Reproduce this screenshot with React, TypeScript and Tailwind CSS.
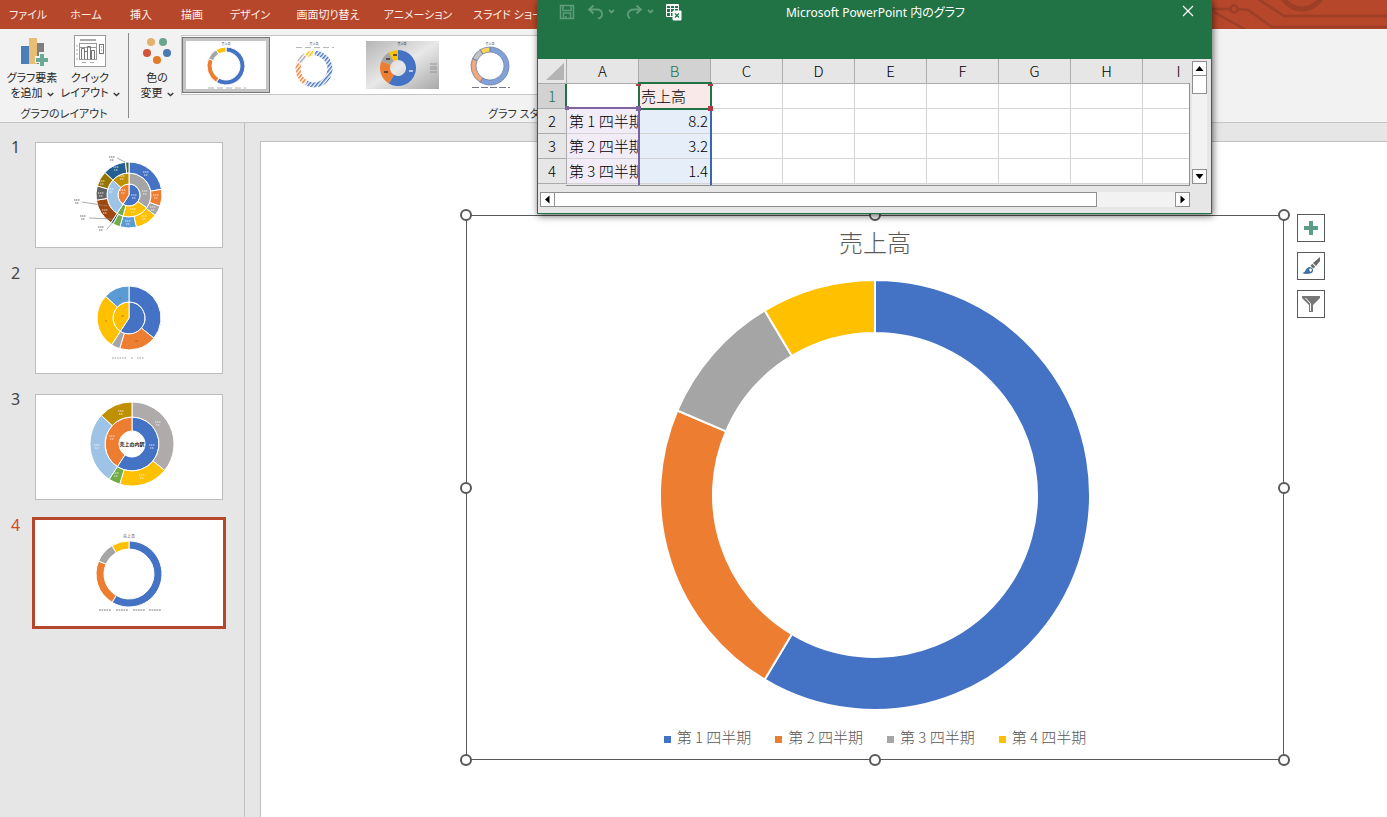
import type { ReactNode } from "react";

type Slice = { value: number; color: string };
type Ring = { inner: number; outer: number; slices: Slice[] };

const sales = [
  { label: "第 1 四半期", value: 8.2, color: "#4472c4" },
  { label: "第 2 四半期", value: 3.2, color: "#ed7d31" },
  { label: "第 3 四半期", value: 1.4, color: "#a5a5a5" },
  { label: "第 4 四半期", value: 1.2, color: "#ffc000" },
];

const tabs = [
  { label: "ファイル", width: "w-[56px]" },
  { label: "ホーム", width: "w-[60px]" },
  { label: "挿入", width: "w-[50px]" },
  { label: "描画", width: "w-[52px]" },
  { label: "デザイン", width: "w-[64px]" },
  { label: "画面切り替え", width: "w-[92px]" },
  { label: "アニメーション", width: "w-[88px]" },
  { label: "スライド ショー", width: "w-[92px]" },
];

const columns = ["A", "B", "C", "D", "E", "F", "G", "H", "I"];

const rows = [
  ["", "売上高"],
  ["第 1 四半期", "8.2"],
  ["第 2 四半期", "3.2"],
  ["第 3 四半期", "1.4"],
];

function point(cx: number, cy: number, r: number, turn: number) {
  const a = turn * Math.PI * 2;
  return `${(cx + r * Math.sin(a)).toFixed(2)} ${(cy - r * Math.cos(a)).toFixed(2)}`;
}

function slicePath(cx: number, cy: number, inner: number, outer: number, from: number, to: number) {
  const large = to - from > 0.5 ? 1 : 0;
  return [
    `M${point(cx, cy, outer, from)}`,
    `A${outer} ${outer} 0 ${large} 1 ${point(cx, cy, outer, to)}`,
    `L${point(cx, cy, inner, to)}`,
    inner > 0 ? `A${inner} ${inner} 0 ${large} 0 ${point(cx, cy, inner, from)}` : "",
    "Z",
  ].join(" ");
}

type DonutProps = { cx: number; cy: number; rings: Ring[]; gap?: number; stroke?: string };

function Donut({ cx, cy, rings, gap = 1, stroke = "#fff" }: DonutProps) {
  return (
    <g stroke={stroke} strokeWidth={gap} strokeLinejoin="round">
      {rings.map((ring, i) => {
        const total = ring.slices.reduce((sum, s) => sum + s.value, 0);
        let at = 0;
        return ring.slices.map((s, j) => {
          const from = at / total;
          at += s.value;
          return <path key={`${i}-${j}`} d={slicePath(cx, cy, ring.inner, ring.outer, from, at / total)} fill={s.color} />;
        });
      })}
    </g>
  );
}

// Slice sizes below are in degrees.
const split: Slice[] = [
  { value: 213, color: "#4472c4" },
  { value: 147, color: "#ed7d31" },
];

const slideOneRings: Ring[] = [
  { inner: 0, outer: 11, slices: split },
  {
    inner: 11,
    outer: 22,
    slices: [
      { value: 126, color: "#a5a5a5" },
      { value: 70, color: "#ffc000" },
      { value: 17, color: "#70ad47" },
      { value: 100, color: "#9dc3e6" },
      { value: 47, color: "#bf9000" },
    ],
  },
  {
    inner: 22,
    outer: 33,
    slices: [
      { value: 80, color: "#4472c4" },
      { value: 30, color: "#ed7d31" },
      { value: 18, color: "#a5a5a5" },
      { value: 39, color: "#ffc000" },
      { value: 29, color: "#5b9bd5" },
      { value: 13, color: "#70ad47" },
      { value: 4, color: "#264478" },
      { value: 48, color: "#9e480e" },
      { value: 25, color: "#636363" },
      { value: 27, color: "#997300" },
      { value: 41, color: "#255e91" },
      { value: 6, color: "#43682b" },
    ],
  },
];

const slideTwoRings: Ring[] = [
  {
    inner: 0,
    outer: 16,
    slices: [
      { value: 213, color: "#4472c4" },
      { value: 147, color: "#ffc000" },
    ],
  },
  {
    inner: 16,
    outer: 32,
    slices: [
      { value: 129, color: "#4472c4" },
      { value: 68, color: "#ed7d31" },
      { value: 16, color: "#a5a5a5" },
      { value: 100, color: "#ffc000" },
      { value: 47, color: "#5b9bd5" },
    ],
  },
];

const slideThreeRings: Ring[] = [
  { inner: 13, outer: 27, slices: split },
  {
    inner: 27,
    outer: 42,
    slices: [
      { value: 129, color: "#afabab" },
      { value: 68, color: "#ffc000" },
      { value: 16, color: "#70ad47" },
      { value: 100, color: "#9dc3e6" },
      { value: 47, color: "#bf9000" },
    ],
  },
];

// Data labels too small to read: two short dashes each.
function Labels({ at, color }: { at: [number, number][]; color: string }) {
  return (
    <g stroke={color} strokeWidth="1" opacity="0.8">
      {at.map(([x, y]) => (
        <path key={`${x}-${y}`} d={`M${x - 3} ${y}h6M${x - 2} ${y + 3}h4`} strokeDasharray="1.4 0.5" />
      ))}
    </g>
  );
}

const slides: { title: string; art: ReactNode }[] = [
  {
    title: "スライド 1",
    art: (
      <>
        <Donut cx={94} cy={53} rings={slideOneRings} />
        <Labels
          color="#fff"
          at={[[111, 30], [121, 53], [118, 65], [109, 74], [93, 79], [70, 68], [66, 51], [67, 39], [81, 25], [110, 49], [98, 67], [76, 47], [87, 34], [88, 48], [99, 53]]}
        />
        <path d="M82 16l8 4M47 60l26 4M54 76l24 1M72 87l7-8" stroke="#888" strokeWidth="0.7" fill="none" />
        <Labels color="#444" at={[[77, 15], [42, 58], [48, 74], [66, 85]]} />
      </>
    ),
  },
  {
    title: "スライド 2",
    art: (
      <>
        <Donut cx={94} cy={50} rings={slideTwoRings} />
        <path d="M84 30h2M115 40h2M70 53h2M86 48h3M101 53h1M100 73h3" stroke="#555" strokeWidth="1" opacity="0.5" />
        <path d="M77 90h14M96 90h2M102 90h7" stroke="#999" strokeWidth="1" strokeDasharray="1.5 1" />
      </>
    ),
  },
  {
    title: "スライド 3",
    art: (
      <>
        <Donut cx={97} cy={50} rings={slideThreeRings} />
        <Labels color="#fff" at={[[86, 17], [123, 28], [77, 42], [62, 51], [117, 51], [81, 79], [107, 81]]} />
        <text x="97" y="52" textAnchor="middle" fontSize="5" fontWeight="700" fill="#111">
          売上の内訳
        </text>
      </>
    ),
  },
  {
    title: "スライド 4",
    art: (
      <>
        <text x="94" y="18" textAnchor="middle" fontSize="4" fill="#555">
          売上高
        </text>
        <Donut cx={94} cy={54} rings={[{ inner: 25, outer: 33, slices: sales }]} />
        <path d="M64 90h12M81 90h12M98 90h12M114 90h12" stroke="#777" strokeWidth="1" strokeDasharray="1.8 0.7" />
      </>
    ),
  },
];

function Chevron() {
  return (
    <svg className="ml-1 inline-block h-[5px] w-[7px]" viewBox="0 0 7 5" fill="none" stroke="#333" strokeWidth="1.3">
      <path d="M0.7 1l2.8 2.6L6.3 1" />
    </svg>
  );
}

function TabBar() {
  return (
    <header className="flex h-[29px] shrink-0 overflow-hidden bg-[#b7472a]">
      <nav className="flex">
        {tabs.map((tab) => (
          <button key={tab.label} className={`${tab.width} text-center text-[11px] leading-[29px] whitespace-nowrap text-[#fdf0eb]`}>
            {tab.label}
          </button>
        ))}
      </nav>
      <svg className="ml-auto h-[29px] w-[187px] shrink-0" viewBox="0 0 187 29" fill="none" stroke="#9c3f26" strokeWidth="2.5">
        <path d="M0 9h30M38 9l10 1 24 17h115M14 12l32 18M58 -1l26 17h103" />
        <circle cx="34" cy="9" r="3.5" />
        <circle cx="102" cy="-13" r="22" strokeWidth="5" />
      </svg>
    </header>
  );
}

function AddElementIcon() {
  return (
    <svg className="h-8 w-8" viewBox="0 0 32 32">
      <rect x="5" y="11" width="8" height="18" fill="#4a7ebb" />
      <rect x="13" y="3" width="8" height="26" fill="#e8bd74" />
      <rect x="21" y="8" width="7" height="21" fill="#7f7f7f" />
      <path d="M23 17h5v4h4v7h-4v4h-5v-4h-4v-7h4z" fill="#f2f2f2" />
      <path d="M24 19h4v4h4v4h-4v4h-4v-4h-4v-4h4z" fill="#6aaa94" />
    </svg>
  );
}

function QuickLayoutIcon() {
  return (
    <svg className="h-8 w-8" viewBox="0 0 32 32" fill="none" stroke="#777">
      <rect x="0.5" y="0.5" width="31" height="31" fill="#fff" stroke="#9a9a9a" />
      <path d="M6 5h16" strokeWidth="2" stroke="#aaa" />
      <path d="M5.5 8v17M5 24.5h18M5 12.5h17M5 8.5h17M22.5 8v16" stroke="#999" />
      <path d="M7.5 24V13.5h3V24M10.5 16.5h3V24M13.5 24V11.5h3V24M17.5 24V15.5h3V24" />
      <path d="M2 11h2M2 15h2M2 19h2M2 24h2M8 27.5h4M16 27.5h4" stroke="#aaa" />
      <rect x="25.5" y="9.5" width="4" height="9" />
      <path d="M27 12h1M27 15h1" />
    </svg>
  );
}

function ColorsIcon() {
  return (
    <svg className="h-8 w-8" viewBox="0 0 32 32">
      <circle cx="10" cy="7" r="4" fill="#e8b06e" />
      <circle cx="22" cy="7" r="4" fill="#6aa68d" />
      <circle cx="6" cy="18" r="4" fill="#d0533a" />
      <circle cx="26" cy="18" r="4" fill="#4a7ab5" />
      <circle cx="16" cy="25" r="4" fill="#e07b28" />
    </svg>
  );
}

type ToolButtonProps = { icon: ReactNode; first: string; second: string; width: string };

function ToolButton({ icon, first, second, width }: ToolButtonProps) {
  return (
    <button className={`${width} flex flex-col items-center pt-[6px] text-[11px] leading-[15px] whitespace-nowrap text-[#262626]`}>
      {icon}
      <span className="mt-[3px]">{first}</span>
      <span>
        {second}
        <Chevron />
      </span>
    </button>
  );
}

function StyleGallery() {
  const filled = sales.map((s) => ({ ...s, color: s.color + "aa" }));
  const hatched = sales.map((s, i) => ({ ...s, color: `url(#hatch-${i})` }));
  return (
    <div className="flex h-[60px] max-w-[500px] items-center border border-[#c6c6c6] bg-white">
      <button aria-label="スタイル 1" className="h-[56px] w-[88px] border border-[#777] bg-[#c4c4c4] p-[3px]">
        <svg className="h-full w-full bg-white" viewBox="0 0 80 48">
          <text x="40" y="4" textAnchor="middle" fontSize="3" fill="#555">売上高</text>
          <Donut cx={40} cy={25} rings={[{ inner: 14, outer: 19, slices: sales }]} />
          <path d="M22 47h38" stroke="#999" strokeWidth="0.8" strokeDasharray="6 3" />
        </svg>
      </button>
      <button aria-label="スタイル 2" className="h-[56px] w-[88px] p-1">
        <svg className="h-full w-full" viewBox="0 0 80 48">
          <defs>
            {sales.map((s, i) => (
              <pattern key={s.color} id={`hatch-${i}`} width="3" height="3" patternUnits="userSpaceOnUse" patternTransform="rotate(40)">
                <rect width="1.5" height="3" fill={s.color} />
              </pattern>
            ))}
          </defs>
          <text x="40" y="4" textAnchor="middle" fontSize="3" fill="#555">売上高</text>
          <path d="M22 6.5h38" stroke="#999" strokeWidth="0.7" strokeDasharray="6 3" />
          <Donut cx={40} cy={28} rings={[{ inner: 13, outer: 19, slices: hatched }]} />
        </svg>
      </button>
      <button aria-label="スタイル 3" className="h-[56px] w-[88px] p-1">
        <svg className="h-full w-full" viewBox="0 0 80 48">
          <defs>
            <linearGradient id="style-three" x1="0" y1="0" x2="1" y2="1">
              <stop offset="0" stopColor="#b5b5b5" />
              <stop offset="0.5" stopColor="#e8e8e8" />
              <stop offset="1" stopColor="#a8a8a8" />
            </linearGradient>
          </defs>
          <rect x="4" width="73" height="48" fill="url(#style-three)" />
          <text x="40" y="4" textAnchor="middle" fontSize="3" fill="#333">売上高</text>
          <Donut cx={36} cy={27} gap={0} stroke="none" rings={[{ inner: 8, outer: 18, slices: sales }]} />
          <path d="M22 31h4M24 18h4M31 14h4" stroke="#333" strokeWidth="1.5" />
          <path d="M47 30h4" stroke="#dce6f5" strokeWidth="1.5" />
          <path d="M68 23h7M68 26h7M68 28h7M68 31h7" stroke="#888" strokeWidth="0.8" />
        </svg>
      </button>
      <button aria-label="スタイル 4" className="h-[56px] w-[88px] p-1">
        <svg className="h-full w-full" viewBox="0 0 80 48">
          <text x="40" y="4" textAnchor="middle" fontSize="3" fill="#555">売上高</text>
          <Donut cx={40} cy={25} gap={0.8} stroke="#6b7fa8" rings={[{ inner: 14, outer: 19, slices: filled }]} />
          <path d="M22 46.5h38" stroke="#778" strokeWidth="1" strokeDasharray="7 2" />
        </svg>
      </button>
    </div>
  );
}

function Ribbon() {
  return (
    <div className="flex h-[94px] shrink-0 border-b border-[#c6c6c6] bg-[#f2f2f2]">
      <div className="flex w-[128px] shrink-0 flex-col">
        <div className="flex pl-1">
          <ToolButton icon={<AddElementIcon />} first="グラフ要素" second="を追加" width="w-[56px]" />
          <ToolButton icon={<QuickLayoutIcon />} first="クイック" second="レイアウト" width="w-[60px]" />
        </div>
        <p className="mt-[6px] text-center text-[11px] leading-[15px] text-[#333]">グラフのレイアウト</p>
      </div>
      <div className="my-1 w-px bg-[#8a8a8a]" />
      <div className="flex grow flex-col">
        <div className="flex">
          <ToolButton icon={<ColorsIcon />} first="色の" second="変更" width="w-[52px] pl-1" />
          <div className="grow pt-[6px]">
            <StyleGallery />
          </div>
        </div>
        <p className="mt-[6px] pl-[359px] text-[11px] leading-[15px] text-[#333]">グラフ スタイル</p>
      </div>
    </div>
  );
}

function SlideList() {
  return (
    <ol className="flex w-[245px] shrink-0 flex-col gap-5 border-r border-[#bdbdbd] pt-[19px]">
      {slides.map((slide, i) => {
        const active = i === 3;
        return (
          <li key={slide.title} className="flex">
            <span className={`w-[35px] pl-[11px] font-['Noto_Sans'] text-[16px] leading-[10px] ${active ? "text-[#d24726]" : "text-[#444]"}`}>{i + 1}</span>
            <button
              aria-label={slide.title}
              className={`h-[106px] w-[188px] bg-white ${active ? "outline-3 outline-[#b7472a]" : "outline-1 -outline-offset-1 outline-[#bdbdbd]"}`}
            >
              <svg className="h-full w-full" viewBox="0 0 188 106">
                {slide.art}
              </svg>
            </button>
          </li>
        );
      })}
    </ol>
  );
}

const handles = [
  "-top-[7px] -left-[7px]",
  "-top-[7px] left-1/2 -ml-[6px]",
  "-top-[7px] -right-[7px]",
  "top-1/2 -mt-[6px] -left-[7px]",
  "top-1/2 -mt-[6px] -right-[7px]",
  "-bottom-[7px] -left-[7px]",
  "-bottom-[7px] left-1/2 -ml-[6px]",
  "-bottom-[7px] -right-[7px]",
];

function ChartObject() {
  return (
    <figure className="relative flex max-w-[818px] grow flex-col items-center border border-[#595959] pt-[10px] pb-3 font-light text-[#595959]">
      {handles.map((place) => (
        <span key={place} className={`absolute size-[12px] rounded-full border-2 border-[#595959] bg-white ${place}`} />
      ))}
      <h1 className="text-[24px] leading-[32px]">売上高</h1>
      <svg className="mt-[22px] size-[430px]" viewBox="0 0 430 430">
        <Donut cx={215} cy={215} gap={2} rings={[{ inner: 162, outer: 215, slices: sales }]} />
      </svg>
      <ul className="mt-[17px] flex gap-6 text-[15px] leading-[20px]">
        {sales.map((s) => (
          <li key={s.label} className="flex items-center gap-[6px]">
            <span className="mt-1 size-[7px]" style={{ backgroundColor: s.color }} />
            {s.label}
          </li>
        ))}
      </ul>
    </figure>
  );
}

function ChartButtons() {
  const box = "flex size-[28px] items-center justify-center border border-[#595959] bg-white";
  return (
    <div className="-mt-px ml-[13px] flex flex-col gap-[10px]">
      <button aria-label="グラフ要素" className={box}>
        <svg className="size-[14px]" viewBox="0 0 14 14" fill="#5a9e86">
          <path d="M5 0h4v5h5v4H9v5H5V9H0V5h5z" />
        </svg>
      </button>
      <button aria-label="グラフ スタイル" className={box}>
        <svg className="size-[20px]" viewBox="0 0 20 20">
          <path d="M19 1v4l-4 5-3-3z" fill="#6b6b6b" />
          <path d="M11.300 7.700l3 3-2 1.800-2.800-2.800z" fill="#6b6b6b" />
          <path d="M1 17c3-.5 3-2 4-3.500 1.500-2.500 4-3.500 6-1.500s1 4.500-1 5.300-6 1-9-.3z" fill="#41719c" />
          <path d="M8 13.500c1-1.300 2.500-1.200 2.800 0s-.5 2-1.600 2.500z" fill="#fff" />
        </svg>
      </button>
      <button aria-label="グラフ フィルター" className={box}>
        <svg className="size-[18px]" viewBox="0 0 18 18">
          <path d="M0 1h18v2l-7 7v7H7v-7L0 3z" fill="#777" />
          <path d="M3.5 3l5 5.500V16" fill="none" stroke="#fff" />
        </svg>
      </button>
    </div>
  );
}

function cellClass(row: number, col: number) {
  if (col === 0 && row > 0) return "bg-[#f2ecf8]";
  if (col === 1 && row > 0) return "bg-[#e6eef9] text-right";
  if (col === 1) return "bg-[#f9e9e9]";
  return "";
}

function Sheet() {
  return (
    <div className="relative h-[127px] grow overflow-hidden font-['Noto_Sans_CJK_JP',sans-serif] [font-feature-settings:normal]">
      <table className="w-[677px] table-fixed border-separate border-spacing-0 bg-white text-[15px] font-light text-black">
        <thead>
          <tr className="h-[25px] bg-[#e6e6e6] leading-[22px]">
            <th className="w-[29px] border-r border-b border-[#ababab] p-0">
              <svg className="ml-2 h-[17px] w-[18px]" viewBox="0 0 18 17" fill="#b4b4b4">
                <path d="M18 0v17H0z" />
              </svg>
            </th>
            {columns.map((c) => (
              <th key={c} scope="col" className={`w-[72px] border-r border-b border-[#ababab] p-0 font-light ${c === "B" ? "bg-[#d2d2d2] text-[#217346]" : ""}`}>
                {c}
              </th>
            ))}
          </tr>
        </thead>
        <tbody>
          {rows.map((row, r) => (
            <tr key={r} className="h-[25px] leading-[22px]">
              <th scope="row" className={`border-r border-b border-[#ababab] p-0 font-light ${r === 0 ? "bg-[#d2d2d2] text-[#217346]" : "bg-[#e6e6e6]"}`}>
                {r + 1}
              </th>
              {columns.map((c, i) => (
                <td key={c} className={`overflow-hidden border-r border-b border-[#d4d4d4] px-[2px] py-0 whitespace-nowrap ${cellClass(r, i)}`}>
                  {row[i]}
                </td>
              ))}
            </tr>
          ))}
        </tbody>
      </table>
      {/* range outlines and their grips */}
      <div className="absolute top-[25px] left-[27px] h-[24px] w-[2px] bg-[#217346]" />
      <div className="absolute top-[23px] left-[100px] h-[28px] w-[74px] border-2 border-[#217346]" />
      <div className="absolute top-[48px] left-[29px] h-[2px] w-[72px] bg-[#8064a2]" />
      <div className="absolute top-[49px] left-[100px] h-[80px] w-[2px] bg-[#7a60a8]" />
      <div className="absolute top-[51px] left-[172px] h-[80px] w-[2px] bg-[#3a68b0]" />
      <div className="absolute top-[47px] left-[98px] size-[5px] bg-[#8064a2]" />
      <div className="absolute top-[47px] left-[27px] size-[4px] bg-[#8064a2]" />
      <div className="absolute top-[47px] left-[170px] size-[5px] bg-[#b03a48]" />
      <div className="absolute top-[25px] left-[170px] h-[2px] w-[5px] bg-[#b03a48]" />
      <div className="absolute top-[25px] left-[98px] h-[2px] w-[5px] bg-[#b03a48]" />
      <div className="absolute top-[24px] right-0 bottom-0 left-[28px] border-r border-b border-[#8f8f8f]" />
    </div>
  );
}

function Arrow({ d, label }: { d: string; label: string }) {
  return (
    <button aria-label={label} className="flex size-[15px] shrink-0 items-center justify-center border border-[#8f8f8f] bg-white">
      <svg className="size-[9px]" viewBox="0 0 9 9">
        <path d={d} />
      </svg>
    </button>
  );
}

function DataWindow() {
  return (
    <section className="absolute top-0 left-[537px] z-10 w-[675px] border border-[#217346] bg-[#e6e6e6] shadow-[1px_2px_7px_rgba(0,0,0,0.6)]">
      <div className="flex h-[58px] items-start bg-[#217346] px-[21px] text-white">
        <div className="flex w-[133px] pt-[2px]">
          <button aria-label="上書き保存">
            <svg className="h-[18px] w-[16px]" viewBox="0 0 16 18" fill="none" stroke="#5f9d7b" strokeWidth="1.5">
              <path d="M1.5 2.5h13v13h-13zM4 2.5v5h8v-5M4.5 15v-5h7v5M7 15v-2" />
            </svg>
          </button>
          <button aria-label="元に戻す" className="ml-3">
            <svg className="h-[18px] w-[30px]" viewBox="0 0 30 18" fill="none" stroke="#5f9d7b" strokeWidth="1.8">
              <path d="M6.5 2.5L2 6.5l4.500 4M2 6.5h8c6 0 7 8 1 9M22 7l2.500 2.500L27 7" />
            </svg>
          </button>
          <button aria-label="やり直し" className="ml-[9px]">
            <svg className="h-[18px] w-[30px]" viewBox="0 0 30 18" fill="none" stroke="#5f9d7b" strokeWidth="1.8">
              <path d="M10.500 2.500l4.500 4-4.500 4M15 6.500H8c-6 0-8 6-4 9M22 7l2.500 2.500L27 7" />
            </svg>
          </button>
          <button aria-label="Excel でデータを編集" className="ml-[9px]">
            <svg className="h-[18px] w-[18px]" viewBox="0 0 18 18" fill="none" stroke="#fff">
              <path d="M1.5 1.5h12v12h-12zM1.5 5.5h12M1.5 9.5h12M5.5 1.5v12M9.5 1.5v12M2 2.5h11" />
              <path d="M8 8h8v9H8z" fill="#fff" />
              <path d="M10 10.500l4 4M14 10.500l-4 4" stroke="#217346" strokeWidth="1.3" />
            </svg>
          </button>
        </div>
        <h2 className="grow pr-[123px] text-center text-[12px] leading-[24px] whitespace-nowrap">Microsoft PowerPoint 内のグラフ</h2>
        <button aria-label="閉じる" className="-mr-[4px] pt-1">
          <svg className="size-[12px]" viewBox="0 0 12 12" stroke="#fff" strokeWidth="1.2">
            <path d="M1 1l10 10M11 1L1 11" />
          </svg>
        </button>
      </div>
      <div className="flex">
        <Sheet />
        <div className="mt-[2px] mr-1 mb-[2px] ml-[2px] flex w-[15px] shrink-0 flex-col bg-[#f2f2f2]">
          <Arrow d="M4.500 2L8.500 7H.5z" label="上へ" />
          <div className="h-[18px] border border-t-0 border-[#8f8f8f] bg-white" />
          <div className="grow" />
          <Arrow d="M4.500 7L8.500 2H.5z" label="下へ" />
        </div>
      </div>
      <div className="mt-[6px] mr-[21px] mb-[6px] ml-[2px] flex bg-[#f2f2f2]">
        <Arrow d="M2 4.500L6.500 .5v8z" label="左へ" />
        <div className="w-[542px] border border-l-0 border-[#8f8f8f] bg-white" />
        <div className="grow" />
        <Arrow d="M7 4.500L2.500 .5v8z" label="右へ" />
      </div>
    </section>
  );
}

export default function App() {
  return (
    <div className="relative flex h-screen flex-col overflow-hidden bg-[#e6e6e6] font-['Noto_Sans','Noto_Sans_CJK_JP',sans-serif] [font-feature-settings:'palt']">
      <TabBar />
      <Ribbon />
      <div className="flex min-h-0 grow">
        <SlideList />
        <main className="flex grow pt-[18px] pl-[15px]">
          <div className="flex grow items-start border-t border-l border-[#c0c0c0] bg-white pt-[73px] pl-[205px] font-['Noto_Sans_CJK_JP',sans-serif] [font-feature-settings:normal]">
            <ChartObject />
            <ChartButtons />
          </div>
        </main>
      </div>
      <DataWindow />
    </div>
  );
}
